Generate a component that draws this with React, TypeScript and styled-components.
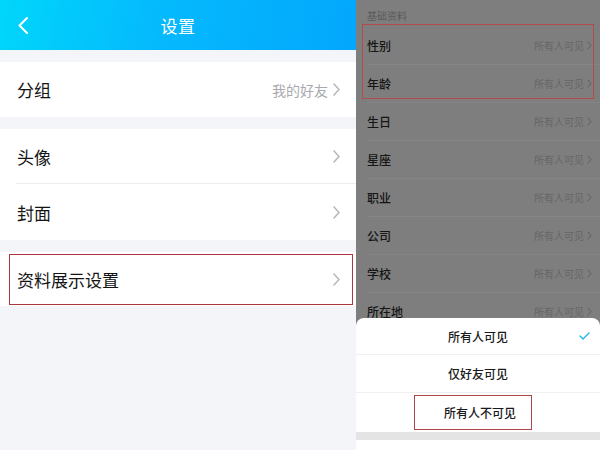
import React from "react";
import styled, { createGlobalStyle } from "styled-components";

const GlobalStyle = createGlobalStyle`
  html, body { margin: 0; padding: 0; }
  body {
    font-family: "Noto Sans CJK SC", "Noto Sans", sans-serif;
    -webkit-font-smoothing: antialiased;
  }
`;

const Screen = styled.div`
  display: flex;
  width: 600px;
  height: 450px;
  overflow: hidden;
  background: #fff;
`;

/* ---------- left: settings page ---------- */

const LeftPane = styled.div`
  width: 356px;
  flex: none;
  background: #f3f5f9;
  display: flex;
  flex-direction: column;
`;

const Header = styled.header`
  height: 50px;
  flex: none;
  background: linear-gradient(100deg, #00d6fb 0%, #05b9fd 45%, #03a7fc 100%);
  display: grid;
  grid-template-columns: 60px 1fr 60px;
  align-items: center;
  color: #fff;
`;

const BackButton = styled.button`
  border: 0;
  background: none;
  padding: 0 0 0 18px;
  height: 100%;
  display: flex;
  align-items: center;
  cursor: pointer;
`;

const Title = styled.h1`
  margin: 0;
  font-size: 17px;
  font-weight: 400;
  text-align: center;
  letter-spacing: 0.5px;
`;

const Group = styled.section<{ $gap: number }>`
  margin-top: ${(p) => p.$gap}px;
  background: #fff;
  display: flex;
  flex-direction: column;
`;

const Row = styled.div<{ $h: number; $line?: boolean; $mark?: boolean }>`
  position: relative;
  height: ${(p) => p.$h}px;
  display: flex;
  align-items: center;
  justify-content: space-between;
  padding: 0 16px 0 17px;
  ${(p) =>
    p.$line
      ? `&::before { content: ""; position: absolute; left: 16px; right: 0; bottom: 0; height: 1px; background: #ebedf0; }`
      : ""}
  ${(p) =>
    p.$mark
      ? `&::after { content: ""; position: absolute; top: 2px; bottom: 1px; left: 9px; right: 3px; border: 1.5px solid #a8383c; pointer-events: none; }`
      : ""}
`;

const Label = styled.span`
  font-size: 17px;
  color: #141414;
`;

const Trail = styled.span`
  display: flex;
  align-items: center;
  gap: 5px;
  font-size: 14px;
  color: #a8aab0;
`;

const Chevron = ({ w = 7, h = 13, color = "#b5b7bc", sw = 1.5 }: { w?: number; h?: number; color?: string; sw?: number }) => (
  <svg width={w} height={h} viewBox={`0 0 ${w} ${h}`} fill="none">
    <polyline
      points={`1,1 ${w - 1},${h / 2} 1,${h - 1}`}
      stroke={color}
      strokeWidth={sw}
      strokeLinecap="round"
      strokeLinejoin="round"
    />
  </svg>
);

/* ---------- right: profile visibility with sheet ---------- */

const RightPane = styled.div`
  flex: 1;
  position: relative;
  background: #7e7e7e;
  display: flex;
  flex-direction: column;
`;

const SectionTitle = styled.div`
  height: 27px;
  flex: none;
  box-sizing: border-box;
  padding: 9px 0 0 11px;
  font-size: 10px;
  color: #5a5a5a;
  line-height: 14px;
`;

const MarkedGroup = styled.div`
  position: relative;
  &::after {
    content: "";
    position: absolute;
    top: -3px;
    bottom: 4px;
    left: 6px;
    right: 6px;
    border: 1.5px solid #b34a4c;
    pointer-events: none;
  }
`;

const InfoRow = styled.div`
  height: 38px;
  box-sizing: border-box;
  margin-left: 11px;
  padding-right: 8px;
  border-bottom: 1px solid #858585;
  display: flex;
  align-items: center;
  justify-content: space-between;
`;

const InfoLabel = styled.span`
  font-size: 12px;
  font-weight: 500;
  color: #151515;
`;

const InfoValue = styled.span`
  display: flex;
  align-items: center;
  gap: 3px;
  font-size: 10px;
  color: #666666;
`;

const Sheet = styled.div`
  position: absolute;
  left: 0;
  right: 0;
  bottom: 0;
  height: 132px;
  background: #fff;
  border-radius: 8px 8px 0 0;
  display: flex;
  flex-direction: column;
  overflow: hidden;
`;

const Option = styled.div<{ $h: number; $line?: boolean }>`
  position: relative;
  height: ${(p) => p.$h}px;
  flex: none;
  box-sizing: border-box;
  border-bottom: ${(p) => (p.$line ? "1px solid #f0f0f0" : "0")};
  display: flex;
  align-items: center;
  justify-content: center;
  font-size: 12px;
  font-weight: 500;
  color: #1a1a1a;
`;

const Check = styled.span`
  position: absolute;
  right: 10px;
  top: 50%;
  transform: translateY(-50%);
  display: flex;
`;

const MarkedText = styled.span`
  width: 118px;
  height: 35px;
  box-sizing: border-box;
  margin-right: 10px;
  padding-left: 29px;
  border: 1.5px solid #b04548;
  display: flex;
  align-items: center;
`;

const SheetGap = styled.div`
  height: 8px;
  flex: none;
  background: #e4e4e4;
`;

const SheetRest = styled.div`
  flex: 1;
`;

const fields = ["生日", "星座", "职业", "公司", "学校", "所在地"];

const Info = ({ label }: { label: string }) => (
  <InfoRow>
    <InfoLabel>{label}</InfoLabel>
    <InfoValue>
      所有人可见
      <Chevron w={5} h={9} color="#5e5e5e" sw={1} />
    </InfoValue>
  </InfoRow>
);

export default function App() {
  return (
    <>
      <GlobalStyle />
      <Screen>
        <LeftPane>
          <Header>
            <BackButton aria-label="返回">
              <svg width="10" height="17" viewBox="0 0 10 17" fill="none">
                <polyline points="9,1 1.5,8.5 9,16" stroke="#fff" strokeWidth="2" strokeLinecap="round" strokeLinejoin="round" />
              </svg>
            </BackButton>
            <Title>设置</Title>
            <span />
          </Header>

          <Group $gap={12}>
            <Row $h={55}>
              <Label>分组</Label>
              <Trail>
                我的好友
                <Chevron />
              </Trail>
            </Row>
          </Group>

          <Group $gap={12}>
            <Row $h={55} $line>
              <Label>头像</Label>
              <Trail>
                <Chevron />
              </Trail>
            </Row>
            <Row $h={56}>
              <Label>封面</Label>
              <Trail>
                <Chevron />
              </Trail>
            </Row>
          </Group>

          <Group $gap={12}>
            <Row $h={54} $mark>
              <Label>资料展示设置</Label>
              <Trail>
                <Chevron />
              </Trail>
            </Row>
          </Group>
        </LeftPane>

        <RightPane>
          <SectionTitle>基础资料</SectionTitle>
          <MarkedGroup>
            <Info label="性别" />
            <Info label="年龄" />
          </MarkedGroup>
          {fields.map((f) => (
            <Info key={f} label={f} />
          ))}

          <Sheet>
            <Option $h={37} $line>
              所有人可见
              <Check>
                <svg width="11" height="8" viewBox="0 0 11 8" fill="none">
                  <polyline points="1,4 4,7 10,1" stroke="#22b4f0" strokeWidth="1.4" strokeLinecap="round" strokeLinejoin="round" />
                </svg>
              </Check>
            </Option>
            <Option $h={38} $line>
              仅好友可见
            </Option>
            <Option $h={39}>
              <MarkedText>所有人不可见</MarkedText>
            </Option>
            <SheetGap />
            <SheetRest />
          </Sheet>
        </RightPane>
      </Screen>
    </>
  );
}
